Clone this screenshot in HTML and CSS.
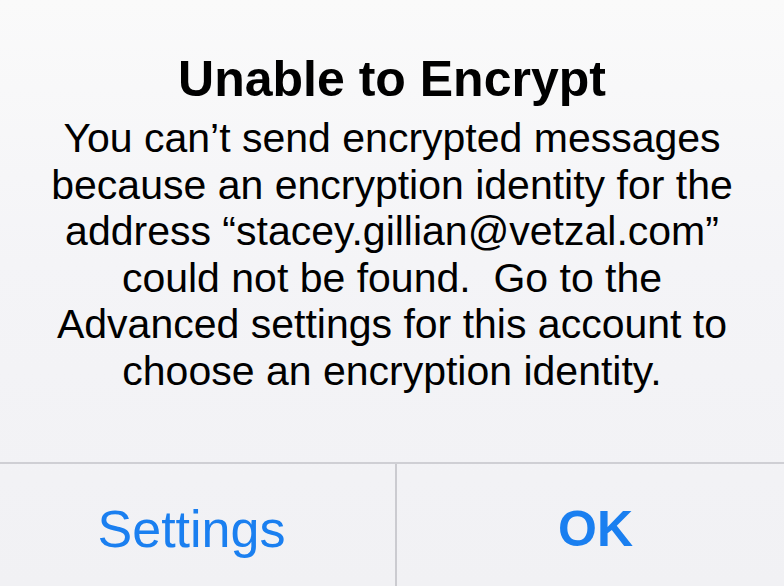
FILE: index.html
```html
<!DOCTYPE html>
<html>
<head>
<meta charset="utf-8">
<link rel="stylesheet" href="styles.css">
</head>
<body>
<div class="alert">
  <div class="content">
    <h1 class="title">Unable to Encrypt</h1>
    <p class="message">You can’t send encrypted messages<br>because an encryption identity for the<br>address “stacey.gillian@vetzal.com”<br>could not be found.&nbsp; Go to the<br>Advanced settings for this account to<br>choose an encryption identity.</p>
  </div>
  <div class="actions">
    <div class="btn btn-left">Settings</div>
    <div class="btn btn-right">OK</div>
  </div>
</div>
</body>
</html>
```
FILE: styles.css
```css
html, body {
  margin: 0;
  padding: 0;
}
body {
  width: 784px;
  height: 586px;
  overflow: hidden;
  font-family: "Liberation Sans", Arial, sans-serif;
}
.alert {
  width: 784px;
  height: 586px;
  display: flex;
  flex-direction: column;
  background: linear-gradient(180deg, #fafafa 0%, #f4f4f7 45%, #f1f1f4 100%);
}
.content {
  height: 462px;
  box-sizing: border-box;
  padding-top: 51px;
  text-align: center;
  color: #000;
}
.title {
  margin: 0;
  font-size: 50px;
  line-height: 56px;
  font-weight: bold;
}
.message {
  margin: 8px 0 0;
  font-size: 41px;
  line-height: 46.6px;
  font-weight: normal;
}
.actions {
  flex: 1;
  display: grid;
  grid-template-columns: 395px 1fr;
  border-top: 2px solid #cfcfd4;
}
.btn {
  display: flex;
  justify-content: center;
  align-items: center;
  color: #1a7ff0;
  padding-top: 8px;
}
.btn-left {
  font-size: 52px;
  padding-right: 12px;
}
.btn-right {
  font-size: 50px;
  font-weight: bold;
  padding-left: 10px;
  border-left: 2px solid #cbcbd0;
}
```
